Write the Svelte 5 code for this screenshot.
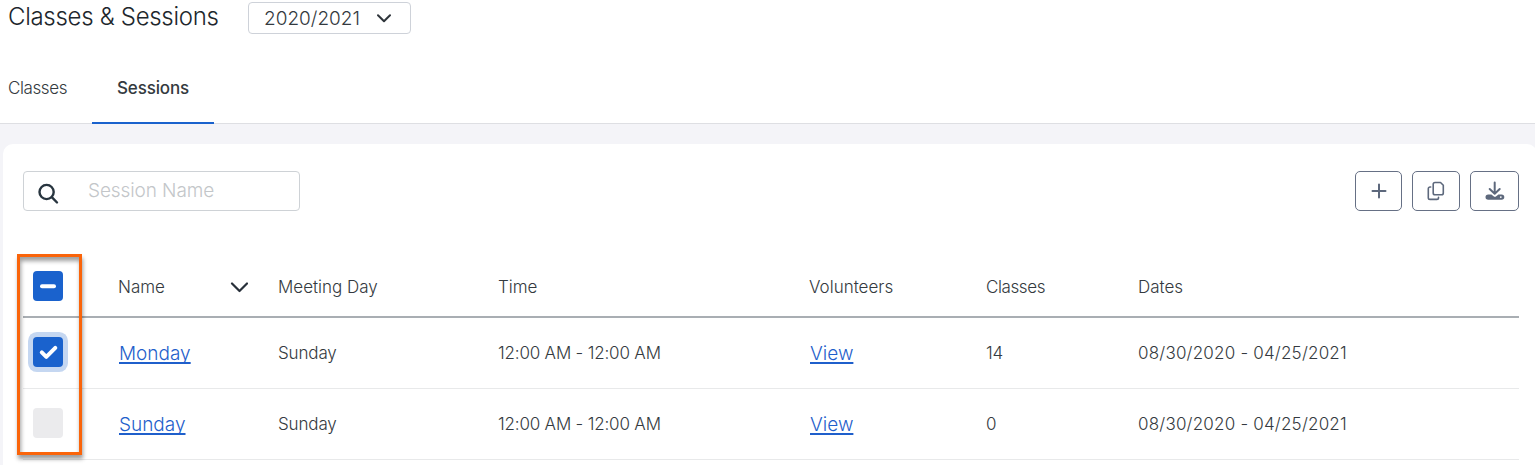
<script lang="ts">
	type Session = {
		name: string;
		day: string;
		time: string;
		classes: number;
		dates: string;
		checked: boolean;
	};

	let year = $state("2020/2021");
	let tab = $state<"classes" | "sessions">("sessions");
	let search = $state("");

	let sessions = $state<Session[]>([
		{
			name: "Monday",
			day: "Sunday",
			time: "12:00 AM - 12:00 AM",
			classes: 14,
			dates: "08/30/2020 - 04/25/2021",
			checked: true,
		},
		{
			name: "Sunday",
			day: "Sunday",
			time: "12:00 AM - 12:00 AM",
			classes: 0,
			dates: "08/30/2020 - 04/25/2021",
			checked: false,
		},
	]);

	let allChecked = $derived(sessions.every((s) => s.checked));
	let someChecked = $derived(sessions.some((s) => s.checked));

	function toggleAll() {
		const next = !allChecked;
		for (const s of sessions) s.checked = next;
	}
</script>

<div class="page">
	<header class="page-head">
		<h1>Classes &amp; Sessions</h1>
		<button type="button" class="year-select">
			<span>{year}</span>
			<svg width="14" height="9" viewBox="0 0 14 9">
				<path d="M1 1.3 7 7.2 13 1.3" />
			</svg>
		</button>
	</header>

	<nav class="tabs">
		<button
			type="button"
			class="tab"
			class:active={tab === "classes"}
			onclick={() => (tab = "classes")}>Classes</button
		>
		<button
			type="button"
			class="tab tab-sessions"
			class:active={tab === "sessions"}
			onclick={() => (tab = "sessions")}>Sessions</button
		>
	</nav>

	<main class="card">
		<div class="toolbar">
			<label class="search">
				<svg width="22" height="22" viewBox="0 0 22 22">
					<circle cx="8.6" cy="9" r="7.1" />
					<path d="M13.8 14.2 19 19.500" />
				</svg>
				<input
					type="text"
					placeholder="Session Name"
					aria-label="Session Name"
					bind:value={search}
				/>
			</label>

			<div class="actions">
				<button type="button" class="add" aria-label="Add">
					<svg width="16" height="16" viewBox="0 0 16 16">
						<path class="line" d="M8 1.500v13M1.500 8h13" />
					</svg>
				</button>
				<button type="button" class="copy" aria-label="Copy">
					<svg width="18" height="20" viewBox="0 0 18 20">
						<path
							class="thin"
							d="M8 1.500h5.500l2.800 2.800V12a1.800 1.800 0 0 1-1.800 1.800H8A1.800 1.800 0 0 1 6.200 12V3.300A1.800 1.800 0 0 1 8 1.500z"
						/>
						<path
							class="thin"
							d="M3.700 6H3a1.700 1.700 0 0 0-1.700 1.700v9A1.700 1.700 0 0 0 3 18.400h6.800a1.700 1.700 0 0 0 1.700-1.700v-.4"
						/>
					</svg>
				</button>
				<button type="button" class="download" aria-label="Download">
					<svg width="20" height="20" viewBox="0 0 20 20">
						<path
							class="solid"
							d="M3.200 13.400h3.200l2.200 1.800a1.900 1.900 0 0 0 2.600 0l2.200-1.800h3.200a2.600 2.600 0 0 1 0 5.400H3.200a2.600 2.600 0 0 1 0-5.400z"
						/>
						<circle cx="15.800" cy="16.100" r=".9" fill="#fff" />
						<path class="line" d="M9.700 1.500v11M4.700 8l5 4.700 5-4.700" />
					</svg>
				</button>
			</div>
		</div>

		<div class="table">
			<div class="row head">
				<div class="check-cell">
					<button
						type="button"
						class="check"
						class:on={someChecked}
						aria-label="Select all"
						onclick={toggleAll}
					>
						{#if allChecked}
							{@render tick()}
						{:else if someChecked}
							<svg width="30" height="30" viewBox="0 0 30 30">
								<path d="M9 15.200h12" />
							</svg>
						{/if}
					</button>
				</div>
				<div class="name-head">
					<span>Name</span>
					<svg width="18" height="11" viewBox="0 0 18 11">
						<path d="M2 1.500 9.500 9 17 1.500" />
					</svg>
				</div>
				<div>Meeting Day</div>
				<div>Time</div>
				<div>Volunteers</div>
				<div class="tight">Classes</div>
				<div>Dates</div>
			</div>

			{#each sessions as s}
				<div class="row">
					<div class="check-cell">
						<button
							type="button"
							class="check"
							class:on={s.checked}
							class:ring={s.checked}
							aria-label={s.name}
							onclick={() => (s.checked = !s.checked)}
						>
							{#if s.checked}{@render tick()}{/if}
						</button>
					</div>
					<div class="link-cell"><a href="#session">{s.name}</a></div>
					<div class="day">{s.day}</div>
					<div class="time">{s.time}</div>
					<div class="link-cell"><a href="#volunteers">View</a></div>
					<div class="num">{s.classes}</div>
					<div class="dates">{s.dates}</div>
				</div>
			{/each}

			<div class="callout"></div>
		</div>
	</main>
</div>

{#snippet tick()}
	<svg width="30" height="30" viewBox="0 0 30 30">
		<path class="tick" d="M8.800 15.300l4.500 4.500 9-9" />
	</svg>
{/snippet}

<style>
	:global(body) {
		margin: 0;
		background: #f4f4f8;
	}

	.page {
		height: 465px;
		overflow: hidden;
		font-family: Inter, "Open Sans", sans-serif;
		font-weight: 300;
		font-size: 17px;
		color: #343a40;
	}

	button {
		padding: 0;
		border: none;
		background: none;
		font: inherit;
		color: inherit;
		cursor: pointer;
	}

	svg {
		display: block;
		flex: none;
		fill: none;
		stroke-linecap: round;
		stroke-linejoin: round;
	}

	/* ── Heading ── */
	.page-head {
		display: flex;
		align-items: flex-start;
		height: 52px;
		padding-left: 8px;
		background: #fff;
	}

	h1 {
		width: 240px;
		margin: 0;
		font-size: 24px;
		font-weight: 300;
		line-height: 34px;
		letter-spacing: -0.3px;
		white-space: nowrap;
		color: #20262c;
	}

	.year-select {
		display: flex;
		align-items: center;
		gap: 17px;
		box-sizing: border-box;
		width: 163px;
		height: 32px;
		margin-top: 2px;
		padding-left: 15px;
		border: 1px solid #ced2d9;
		border-radius: 4px;
		font-size: 19px;
	}

	.year-select svg {
		stroke: #2f353b;
		stroke-width: 2;
	}

	/* ── Tabs ── */
	.tabs {
		display: flex;
		box-sizing: border-box;
		height: 72px;
		border-bottom: 1px solid #dedfe3;
		background: #fff;
	}

	.tab {
		box-sizing: border-box;
		width: 92px;
		height: 72px;
		padding: 1px 0 0 8px;
		text-align: left;
		letter-spacing: -0.4px;
		border-bottom: 2px solid transparent;
	}

	.tab-sessions {
		width: 122px;
		padding-left: 25px;
		letter-spacing: -0.15px;
	}

	.tab.active {
		font-weight: 500;
		border-bottom-color: #1a62cd;
	}

	/* ── Card ── */
	.card {
		height: 340px;
		margin: 20px -2px 0 3px;
		padding: 27px 18px 0 20px;
		border-radius: 10px;
		background: #fff;
	}

	.toolbar {
		display: flex;
		justify-content: space-between;
		height: 85px;
	}

	.search {
		display: flex;
		align-items: center;
		box-sizing: border-box;
		width: 277px;
		height: 40px;
		padding-left: 14px;
		border: 1px solid #ced2d6;
		border-radius: 4px;
	}

	.search svg {
		margin-top: 5px;
		stroke: #28353f;
		stroke-width: 2.4;
	}

	.search input {
		width: 180px;
		margin-left: 28px;
		padding: 0 0 1px;
		border: none;
		outline: none;
		font: inherit;
		font-size: 19px;
		letter-spacing: -0.1px;
	}

	.search input::placeholder {
		color: #c3c6c9;
		opacity: 1;
	}

	.actions {
		display: flex;
		gap: 10px;
	}

	.actions button {
		display: grid;
		place-items: center;
		box-sizing: border-box;
		width: 48px;
		height: 40px;
		border: 1px solid #667085;
		border-radius: 5px;
	}

	.actions .add {
		width: 47px;
	}

	.actions .download {
		width: 49px;
	}

	.line {
		stroke: #5d687c;
		stroke-width: 2;
	}

	.thin {
		stroke: #5d687c;
		stroke-width: 1.6;
	}

	.solid {
		fill: #5d687c;
	}

	/* ── Table ── */
	.table {
		position: relative;
	}

	.row {
		display: grid;
		grid-template-columns: 95px 160px 220px 311px 177px 152px 1fr;
		align-items: center;
		box-sizing: border-box;
		height: 71px;
		border-bottom: 1px solid #e8e9ea;
		white-space: nowrap;
	}

	.row.head {
		height: 62px;
		padding-top: 2px;
		border-bottom: 2px solid #a9aeb3;
	}

	.row.head .check {
		margin-top: -2px;
	}

	.name-head {
		display: flex;
		align-items: center;
		justify-content: space-between;
		padding-right: 30px;
	}

	.name-head svg {
		stroke: #28303a;
		stroke-width: 2.2;
	}

	.tight {
		letter-spacing: -0.4px;
	}

	.day {
		letter-spacing: -0.15px;
	}

	.time {
		letter-spacing: -0.18px;
	}

	.num {
		letter-spacing: -0.3px;
	}

	.dates {
		letter-spacing: 0.2px;
	}

	.check-cell {
		padding-left: 10px;
	}

	.check {
		display: block;
		width: 30px;
		height: 30px;
		margin-top: -2px;
		border-radius: 4px;
		background: #ebebed;
	}

	.check.on {
		background: #1a62cd;
	}

	.check.ring {
		box-shadow: 0 0 0 5px #c5d7f1;
	}

	.check path {
		stroke: #fff;
		stroke-width: 4;
	}

	.link-cell {
		padding-left: 1px;
	}

	a {
		font-size: 19px;
		color: #1f5fcb;
		text-decoration: underline;
		text-decoration-thickness: 2px;
		text-underline-offset: 2px;
		text-decoration-skip-ink: none;
	}

	/* Highlight around the checkbox column */
	.callout {
		position: absolute;
		top: -2px;
		left: -6px;
		box-sizing: border-box;
		width: 65px;
		height: 201px;
		border: 3px solid #fa640a;
		box-shadow:
			1px 4px 4px rgba(0, 0, 0, 0.38),
			inset 1px 4px 4px rgba(0, 0, 0, 0.38);
		pointer-events: none;
	}
</style>
